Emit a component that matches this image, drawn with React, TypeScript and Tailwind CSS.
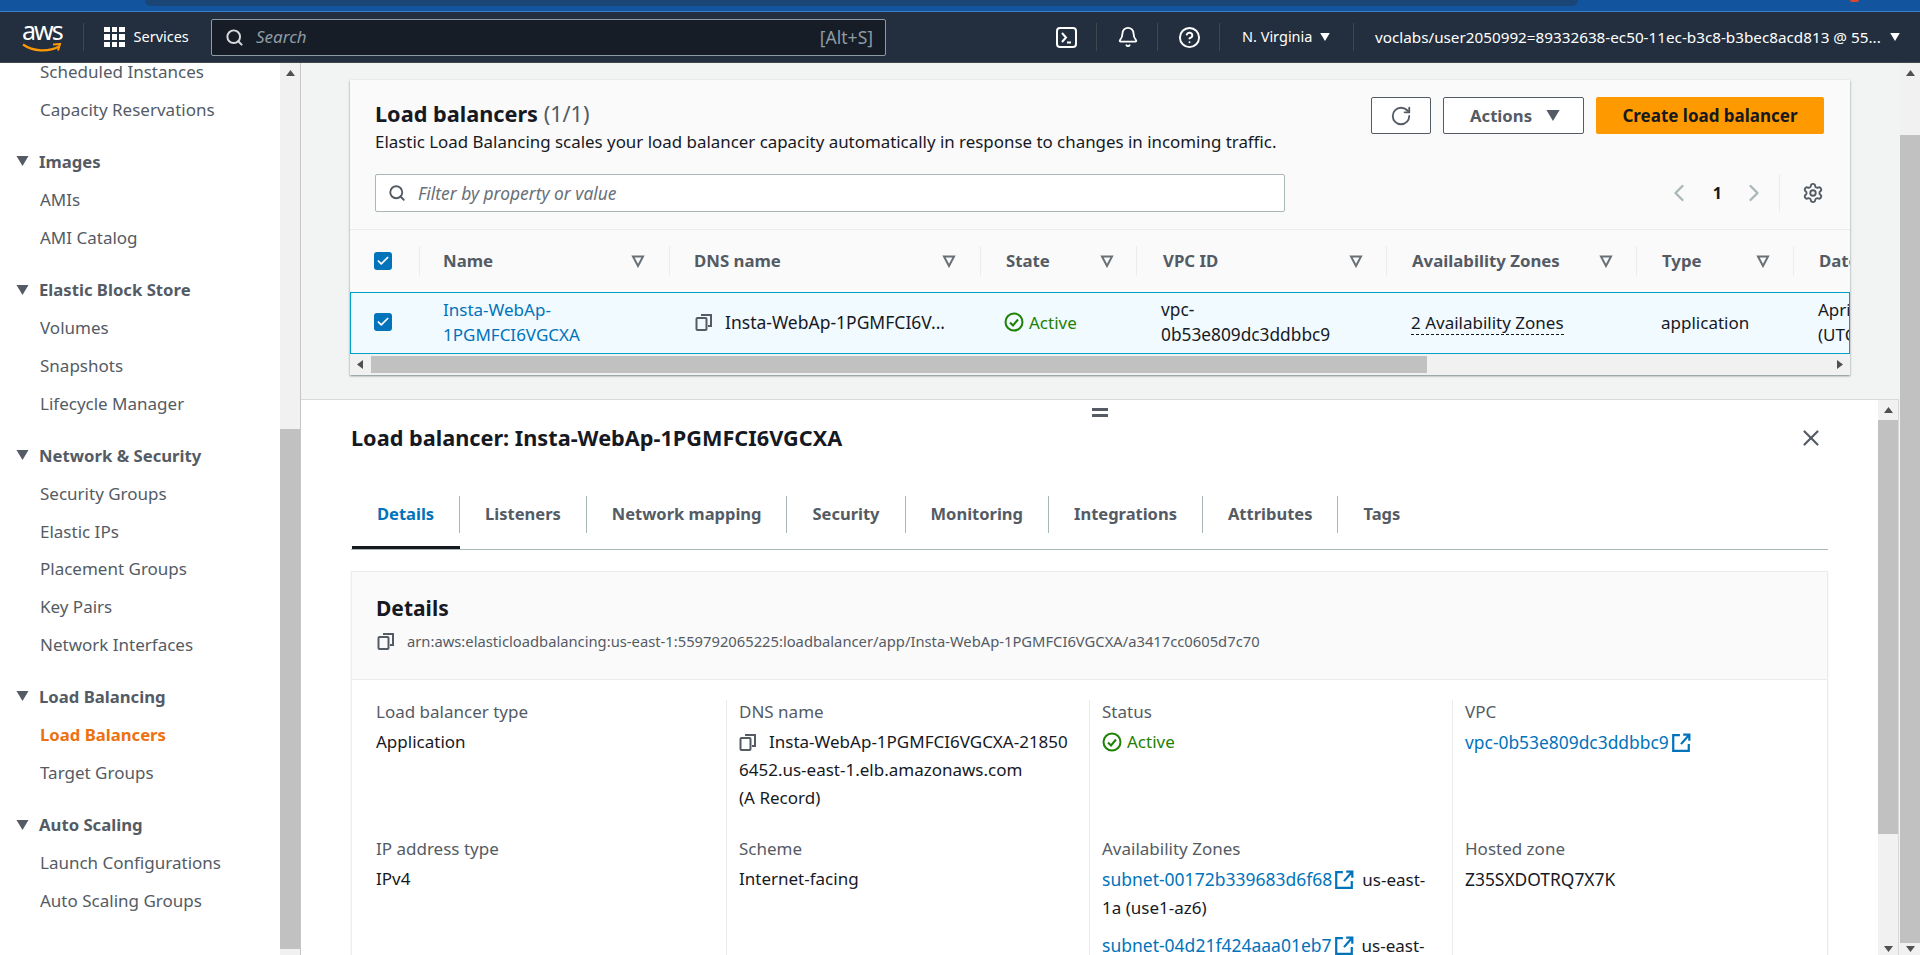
import { Search, RotateCw, Settings, Bell, CircleHelp, X, ChevronLeft, ChevronRight, Check } from "lucide-react";

const FONT = "font-['Noto_Sans',sans-serif]";

const navGroups = [
  { title: "", items: ["Scheduled Instances", "Capacity Reservations"] },
  { title: "Images", items: ["AMIs", "AMI Catalog"] },
  { title: "Elastic Block Store", items: ["Volumes", "Snapshots", "Lifecycle Manager"] },
  { title: "Network & Security", items: ["Security Groups", "Elastic IPs", "Placement Groups", "Key Pairs", "Network Interfaces"] },
  { title: "Load Balancing", items: ["Load Balancers", "Target Groups"] },
  { title: "Auto Scaling", items: ["Launch Configurations", "Auto Scaling Groups"] },
];

const columns = [
  { label: "Name", cls: "w-[250px] pr-[24px] pl-[23px]" },
  { label: "DNS name", cls: "w-[311px] pr-[24px] pl-[24px]" },
  { label: "State", cls: "w-[156px] pr-[22px] pl-[25px]" },
  { label: "VPC ID", cls: "w-[250px] pr-[23px] pl-[26px]" },
  { label: "Availability Zones", cls: "w-[250px] pr-[23px] pl-[25px]" },
  { label: "Type", cls: "w-[157px] pr-[23px] pl-[25px]" },
];

const tabs = ["Details", "Listeners", "Network mapping", "Security", "Monitoring", "Integrations", "Attributes", "Tags"];

function CopyIcon() {
  return (
    <svg width="18" height="18" viewBox="0 0 18 18" fill="none" stroke="#545b64" strokeWidth="2" className="inline-block shrink-0 align-[-3px]">
      <rect x="1.5" y="5" width="10" height="12" rx="1" />
      <path d="M6 2h10v11h-3" />
    </svg>
  );
}

function ExternalIcon() {
  return (
    <svg width="20" height="20" viewBox="0 0 18 18" fill="none" stroke="#0073bb" strokeWidth="2" className="ml-[2px] inline-block shrink-0 align-[-4px]">
      <path d="M8 2H2v14h14v-6" />
      <path d="M11 1.500h5.500V7M16 2l-7 8" />
    </svg>
  );
}

function ActiveIcon() {
  return (
    <svg width="20" height="20" viewBox="0 0 20 20" fill="none" stroke="#1d8102" strokeWidth="2" className="shrink-0">
      <circle cx="10" cy="10" r="8.5" />
      <path d="M6 10.5l3 3 5-6" />
    </svg>
  );
}

function CheckBox() {
  return (
    <span className="flex h-[18px] w-[18px] items-center justify-center rounded-[3px] bg-[#0073bb]">
      <Check size={14} color="white" strokeWidth={3} />
    </span>
  );
}

function SortIcon() {
  return (
    <svg width="14" height="14" viewBox="0 0 14 14" fill="none" stroke="#687078" strokeWidth="2" className="shrink-0">
      <path d="M2 2.5h10L7 12z" />
    </svg>
  );
}

function Caret({ className }: { className: string }) {
  return (
    <svg viewBox="0 0 12 10" className={className} fill="currentColor">
      <path d="M0 0h12L6 10z" />
    </svg>
  );
}

function ScrollArrow({ dir, h = "h-[20px]" }: { dir: "up" | "down"; h?: string }) {
  return (
    <div className={`flex ${h} items-center justify-center text-[#505050]`}>
      <svg width="9" height="6" viewBox="0 0 9 6" fill="currentColor">
        <path d={dir === "up" ? "M4.500 0L9 6H0z" : "M0 0h9L4.500 6z"} />
      </svg>
    </div>
  );
}

function Field({ label, children }: { label: string; children: React.ReactNode }) {
  return (
    <div className="flex flex-col gap-[4px]">
      <span className="text-[17px] leading-[24px] text-[#545b64]">{label}</span>
      <div className="text-[17px] leading-[28px] whitespace-nowrap text-[#16191f]">{children}</div>
    </div>
  );
}

function Subnet({ id }: { id: string }) {
  return (
    <>
      <span className="text-[17.5px] text-[#0073bb]">{id}</span>
      <ExternalIcon />
      <span className="ml-[8px]">us-east-</span>
    </>
  );
}

function Header() {
  return (
    <header className="flex h-[51px] shrink-0 items-center border-b border-[#414750] bg-[#232f3e] text-white">
      <div className="h-[28px] w-[84px] shrink-0 border-r border-[#414750] pl-[22px]">
        <div className="-mt-[4px] h-[22px] text-[25px] leading-[22px] tracking-[-2px]">aws</div>
        <svg width="40" height="11" viewBox="0 0 40 11" fill="none" className="mt-[2px] block">
          <path d="M1 1.500C11 8.500 26 9.500 37 3.500" stroke="#ff9900" strokeWidth="2.2" />
          <path d="M31 1.500l7-.5-2 6.500" stroke="#ff9900" strokeWidth="2" />
        </svg>
      </div>
      <div className="flex w-[127px] shrink-0 items-center gap-[9px] pl-[20px]">
        <div className="grid grid-cols-3 gap-[2px]">
          {[0, 1, 2, 3, 4, 5, 6, 7, 8].map((n) => (
            <div key={n} className="h-[5.5px] w-[5.5px] bg-white" />
          ))}
        </div>
        <span className="text-[14.5px]">Services</span>
      </div>
      <div className="flex h-[37px] w-[675px] shrink-0 items-center rounded-[2px] border border-[#8d9ba5] bg-[#161d26] pr-[12px] pl-[13px]">
        <Search size={19} color="#d5dbdb" strokeWidth={2.5} />
        <span className="ml-[12px] flex-1 text-[17px] text-[#8d9ba5] italic">Search</span>
        <span className="text-[17.5px] text-[#8d9ba5]">[Alt+S]</span>
      </div>
      <div className="flex-1" />
      <div className="flex h-[28px] w-[61px] shrink-0 items-center justify-center border-r border-[#414750]">
        <svg width="21" height="21" viewBox="0 0 21 21" fill="none" stroke="white" strokeWidth="2">
          <rect x="1" y="1" width="19" height="19" rx="3" />
          <path d="M6 6l4 4.500-4 4.500M11 15.500h4" />
        </svg>
      </div>
      <div className="flex h-[28px] w-[61px] shrink-0 items-center justify-center border-r border-[#414750] pl-[2px]">
        <Bell size={22} color="white" strokeWidth={2} />
      </div>
      <div className="flex h-[28px] w-[62px] shrink-0 items-center justify-center border-r border-[#414750] pl-[2px]">
        <CircleHelp size={23} color="white" strokeWidth={2} />
      </div>
      <div className="flex h-[28px] w-[134px] shrink-0 items-center gap-[8px] border-r border-[#414750] pl-[22px] text-[14.5px]">
        N. Virginia
        <Caret className="h-[8px] w-[10px]" />
      </div>
      <div className="flex h-[28px] w-[566px] shrink-0 items-center gap-[9px] pl-[21px] text-[15.25px] whitespace-nowrap">
        voclabs/user2050992=89332638-ec50-11ec-b3c8-b3bec8acd813 @ 55...
        <Caret className="h-[8px] w-[10px]" />
      </div>
    </header>
  );
}

function Sidebar() {
  return (
    <aside className="flex w-[301px] shrink-0 overflow-hidden border-r border-[#c4c6c8] bg-white">
      <div className="-mt-[10px] w-[280px] shrink-0">
        {navGroups.map((group) => (
          <div key={group.items[0]} className="mb-[13.5px]">
            {group.title && (
              <div className="flex h-[39.5px] items-center gap-[10px] pl-[16px] text-[16.7px] font-bold text-[#545b64]">
                <Caret className="h-[10px] w-[13px] text-[#545b64]" />
                {group.title}
              </div>
            )}
            {group.items.map((item) => (
              <div
                key={item}
                className={
                  item === "Load Balancers"
                    ? "flex h-[37.6px] items-center pl-[40px] text-[16.7px] font-bold text-[#ec7211]"
                    : "flex h-[37.6px] items-center pl-[40px] text-[17px] text-[#545b64]"
                }
              >
                {item}
              </div>
            ))}
          </div>
        ))}
      </div>
      <div className="flex w-[20px] shrink-0 flex-col bg-[#f1f1f1]">
        <ScrollArrow dir="up" />
        <div className="mt-[346px] h-[520px] w-full bg-[#c1c1c1]" />
      </div>
    </aside>
  );
}

function LoadBalancersCard() {
  return (
    <section className="ml-[49px] mt-[17px] h-[295px] w-[1500px] overflow-hidden bg-[#fafafa] shadow-[0_1px_2px_rgba(0,28,36,0.5)]">
      <div className="flex h-[150px] border-b border-[#eaeded] pr-[26px] pl-[25px]">
        <div className="flex-1 pt-[19px]">
          <h2 className="text-[21.7px] leading-[30px] font-bold text-[#16191f]">
            Load balancers <span className="font-normal text-[#545b64]">(1/1)</span>
          </h2>
          <p className="mt-[1px] text-[16.9px] leading-[24px] whitespace-nowrap text-[#16191f]">
            Elastic Load Balancing scales your load balancer capacity automatically in response to changes in incoming traffic.
          </p>
          <div className="mt-[20px] flex h-[38px] w-[910px] items-center gap-[12px] rounded-[2px] border border-[#aab7b8] bg-white px-[12px]">
            <Search size={18} color="#545b64" strokeWidth={2.5} />
            <span className="text-[17.4px] text-[#687078] italic">Filter by property or value</span>
          </div>
        </div>
        <div className="flex w-[453px] flex-col items-end pt-[17px]">
          <div className="flex gap-[12px]">
            <button className="flex h-[37px] w-[60px] items-center justify-center rounded-[2px] border border-[#545b64] bg-white text-[#545b64]">
              <RotateCw size={22} strokeWidth={2} />
            </button>
            <button className="flex h-[37px] w-[141px] items-center justify-center gap-[14px] rounded-[2px] border border-[#545b64] bg-white pl-[3px] text-[16.7px] font-bold text-[#545b64]">
              Actions
              <Caret className="h-[11px] w-[14px] text-[#545b64]" />
            </button>
            <button className="h-[37px] w-[228px] rounded-[2px] bg-[#ff9900] text-[17px] font-bold text-[#16191f]">
              Create load balancer
            </button>
          </div>
          <div className="mt-[40px] flex h-[38px] items-center">
            <ChevronLeft size={28} color="#aab7b8" strokeWidth={2} />
            <span className="mr-[18px] ml-[20px] text-[16px] font-bold text-[#16191f]">1</span>
            <ChevronRight size={28} color="#aab7b8" strokeWidth={2} />
            <div className="mr-[22px] ml-[11px] h-[38px] w-px bg-[#eaeded]" />
            <Settings size={22} color="#545b64" strokeWidth={2} />
          </div>
        </div>
      </div>

      <div className="flex h-[62px] items-center">
        <div className="flex w-[69px] shrink-0 justify-center pr-[4px]">
          <CheckBox />
        </div>
        {columns.map((column) => (
          <div key={column.label} className={`${column.cls} flex h-[30px] shrink-0 items-center justify-between border-l border-[#eaeded]`}>
            <span className="text-[16.8px] font-bold whitespace-nowrap text-[#545b64]">{column.label}</span>
            <SortIcon />
          </div>
        ))}
        <div className="flex h-[30px] flex-1 items-center overflow-hidden border-l border-[#eaeded] pl-[25px]">
          <span className="text-[16.8px] font-bold whitespace-nowrap text-[#545b64]">Date created</span>
        </div>
      </div>

      <div className="flex h-[62px] items-center border border-[#00a1c9] bg-[#f1faff] pb-[2px] text-[17px] leading-[25px] text-[#16191f]">
        <div className="flex w-[68px] shrink-0 justify-center pr-[4px]">
          <CheckBox />
        </div>
        <div className="w-[250px] shrink-0 pl-[24px] text-[#0073bb]">
          Insta-WebAp-
          <br />
          1PGMFCI6VGCXA
        </div>
        <div className="flex w-[311px] shrink-0 items-center gap-[12px] pl-[26px]">
          <CopyIcon />
          <span className="text-[17.5px]">Insta-WebAp-1PGMFCI6V...</span>
        </div>
        <div className="flex w-[156px] shrink-0 items-center gap-[5px] pl-[24px] text-[#1d8102]">
          <ActiveIcon />
          Active
        </div>
        <div className="w-[250px] shrink-0 pl-[25px] text-[17.3px]">
          vpc-
          <br />
          0b53e809dc3ddbbc9
        </div>
        <div className="w-[250px] shrink-0 pl-[25px]">
          <span className="border-b border-dashed border-[#16191f]">2 Availability Zones</span>
        </div>
        <div className="w-[157px] shrink-0 pl-[25px]">application</div>
        <div className="flex-1 overflow-hidden pl-[25px] whitespace-nowrap">
          April 5, 2024, 11:28
          <br />
          (UTC-04:00)
        </div>
      </div>

      <div className="flex h-[21px] items-center bg-[#f1f1f1] text-[#505050]">
        <svg width="21" height="9" viewBox="0 0 21 9" fill="currentColor" className="shrink-0">
          <path d="M13 0v9L7 4.500z" />
        </svg>
        <div className="h-[17px] w-[1056px] bg-[#c1c1c1]" />
        <div className="flex-1" />
        <svg width="20" height="9" viewBox="0 0 20 9" fill="currentColor" className="shrink-0">
          <path d="M7 0v9l6-4.500z" />
        </svg>
      </div>
    </section>
  );
}

function DetailsPane() {
  return (
    <section className="mr-[1px] flex min-h-0 flex-1 border-t border-r border-[#d5dbdb] bg-white">
      <div className="min-w-0 flex-1 overflow-hidden pr-[50px] pl-[50px]">
        <div className="flex h-[22px] justify-center pt-[8px]">
          <div className="ml-[20px] flex flex-col gap-[3px]">
            <div className="h-[3px] w-[16px] bg-[#545b64]" />
            <div className="h-[3px] w-[16px] bg-[#545b64]" />
          </div>
        </div>
        <div className="-mt-[1px] flex h-[34px] items-center justify-between">
          <h2 className="text-[21.7px] font-bold text-[#16191f]">Load balancer: Insta-WebAp-1PGMFCI6VGCXA</h2>
          <X size={26} color="#545b64" strokeWidth={2} className="mr-[4px]" />
        </div>

        <div className="mt-[33px] flex h-[62px] border-b border-[#aab7b8] pl-[1px]">
          {tabs.map((tab, i) => (
            <div key={tab} className={i === 0 ? "relative h-[50px] pt-[8px]" : "h-[50px] pt-[8px]"}>
              <div className={i < tabs.length - 1 ? "flex h-[37px] items-center border-r border-[#aab7b8] px-[25px]" : "flex h-[37px] items-center px-[25px]"}>
                <span className={i === 0 ? "text-[16.5px] font-bold text-[#0073bb]" : "text-[16.5px] font-bold text-[#545b64]"}>{tab}</span>
              </div>
              {i === 0 && <div className="absolute top-[58px] left-0 h-[3px] w-full bg-[#16191f]" />}
            </div>
          ))}
        </div>

        <div className="mt-[21px] border border-[#eaeded] shadow-[0_1px_1px_rgba(0,28,36,0.15)]">
          <div className="h-[108px] border-b border-[#eaeded] bg-[#fafafa] px-[25px] pt-[21px]">
            <h3 className="-ml-[1px] text-[21px] leading-[30px] font-bold text-[#16191f]">Details</h3>
            <div className="mt-[7px] flex items-center gap-[12px]">
              <CopyIcon />
              <span className="text-[14.75px] whitespace-nowrap text-[#545b64]">arn:aws:elasticloadbalancing:us-east-1:559792065225:loadbalancer/app/Insta-WebAp-1PGMFCI6VGCXA/a3417cc0605d7c70</span>
            </div>
          </div>
          <div className="grid grid-cols-[374px_363px_363px_1fr] bg-white pt-[20px]">
            <div className="flex h-[300px] flex-col gap-[54px] pr-[20px] pl-[24px]">
              <div className="h-[83px]">
                <Field label="Load balancer type">Application</Field>
              </div>
              <Field label="IP address type">IPv4</Field>
            </div>
            <div className="flex h-[300px] flex-col gap-[54px] border-l border-[#eaeded] pr-[10px] pl-[12px]">
              <div className="h-[83px]">
                <Field label="DNS name">
                  <CopyIcon />
                  <span className="ml-[12px]">Insta-WebAp-1PGMFCI6VGCXA-21850</span>
                  <br />
                  6452.us-east-1.elb.amazonaws.com
                  <br />
                  (A Record)
                </Field>
              </div>
              <Field label="Scheme">Internet-facing</Field>
            </div>
            <div className="flex h-[300px] flex-col gap-[54px] border-l border-[#eaeded] pr-[10px] pl-[12px]">
              <div className="h-[83px]">
                <Field label="Status">
                  <span className="flex items-center gap-[5px] text-[#1d8102]">
                    <ActiveIcon />
                    Active
                  </span>
                </Field>
              </div>
              <Field label="Availability Zones">
                <Subnet id="subnet-00172b339683d6f68" />
                <br />
                1a (use1-az6)
                <div className="mt-[9px]">
                  <Subnet id="subnet-04d21f424aaa01eb7" />
                </div>
              </Field>
            </div>
            <div className="flex h-[300px] flex-col gap-[54px] border-l border-[#eaeded] pr-[10px] pl-[12px]">
              <div className="h-[83px]">
                <Field label="VPC">
                  <span className="text-[17.4px] text-[#0073bb]">vpc-0b53e809dc3ddbbc9</span>
                  <ExternalIcon />
                </Field>
              </div>
              <Field label="Hosted zone">
                <span className="text-[17.4px]">Z35SXDOTRQ7X7K</span>
              </Field>
            </div>
          </div>
        </div>
      </div>
      <div className="flex w-[20px] shrink-0 flex-col bg-[#f1f1f1]">
        <ScrollArrow dir="up" />
        <div className="h-[414px] bg-[#c1c1c1]" />
        <div className="flex-1" />
        <ScrollArrow dir="down" h="h-[12px]" />
      </div>
    </section>
  );
}

export default function App() {
  return (
    <div className={`${FONT} flex h-screen flex-col overflow-hidden bg-[#f2f3f3]`}>
      <div className="h-[12px] shrink-0 border-b border-[#3d7ec4] bg-[#12549d]">
        <div className="flex">
          <div className="h-[6px] w-[145px]" />
          <div className="h-[6px] w-[1433px] rounded-b-[8px] bg-[#1a4675]" />
          <div className="ml-[272px] h-[2px] w-[9px] rounded-b-full bg-[#d9482b]" />
        </div>
      </div>
      <Header />
      <div className="flex min-h-0 flex-1">
        <Sidebar />
        <main className="flex min-w-0 flex-1 flex-col">
          <div className="h-[336px] shrink-0 overflow-hidden">
            <LoadBalancersCard />
          </div>
          <DetailsPane />
        </main>
        <div className="flex w-[20px] shrink-0 flex-col bg-[#f1f1f1]">
          <ScrollArrow dir="up" />
          <div className="mt-[52px] h-[808px] bg-[#c1c1c1]" />
          <ScrollArrow dir="down" h="h-[12px]" />
        </div>
      </div>
    </div>
  );
}
